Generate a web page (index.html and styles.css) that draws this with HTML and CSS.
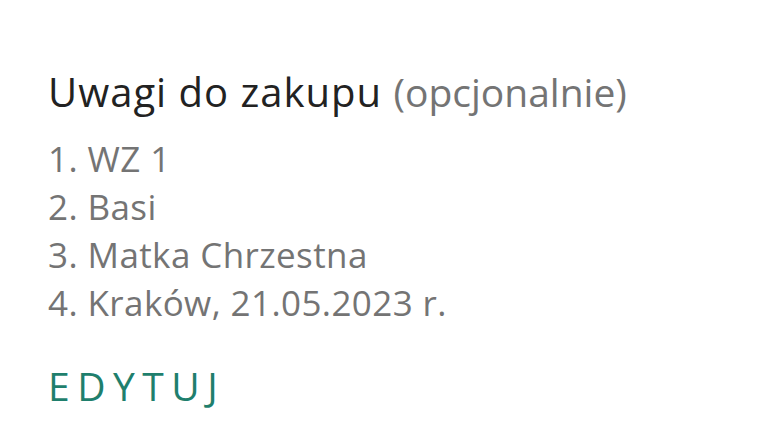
FILE: index.html
```html
<!DOCTYPE html>
<html lang="pl">
<head>
    <meta charset="UTF-8">
    <meta name="viewport" content="width=device-width, initial-scale=1.0">
    <title>Uwagi do zakupu</title>
    <link rel="stylesheet" href="styles.css">
</head>
<body>
    <div class="notes">
        <h2 class="notes-title">Uwagi do zakupu <span class="optional">(opcjonalnie)</span></h2>
        <ul class="notes-list">
            <li>1. WZ 1</li>
            <li>2. Basi</li>
            <li>3. Matka Chrzestna</li>
            <li>4. Kraków, 21.05.2023 r.</li>
        </ul>
        <a class="edit-link" href="#">EDYTUJ</a>
    </div>
</body>
</html>
```

FILE: styles.css
```css
body {
    font-family: "Open Sans", Arial, sans-serif;
    background-color: #fff;
    margin: 0;
    padding: 0;
}
.notes {
    padding: 66px 48px 0;
}
.notes-title {
    margin: 0;
    font-size: 40px;
    font-weight: 400;
    line-height: 52px;
    letter-spacing: 1px;
    color: #222;
}
.optional {
    font-size: 39px;
    letter-spacing: 0;
    color: #747474;
}
.notes-list {
    list-style-type: none;
    margin: 17px 0 0;
    padding: 0;
    font-size: 35px;
    line-height: 48px;
    letter-spacing: 0.4px;
    color: #747474;
}
.edit-link {
    display: inline-block;
    margin-top: 33px;
    font-size: 39px;
    line-height: 52px;
    letter-spacing: 7.5px;
    color: #1f7f6d;
    text-decoration: none;
}
```
